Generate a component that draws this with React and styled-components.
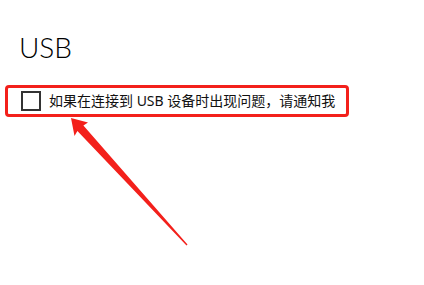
import styled, { createGlobalStyle } from "styled-components";

const GlobalStyle = createGlobalStyle`
  html, body {
    margin: 0;
    padding: 0;
    background: #ffffff;
  }
  body {
    font-family: "Noto Sans", "Noto Sans CJK SC", sans-serif;
    color: #000;
  }
`;

const Page = styled.div`
  position: relative;
  width: 424px;
  height: 285px;
  overflow: hidden;
  background: #fff;
`;

const Title = styled.h1`
  margin: 29px 0 0 19px;
  font-family: Lato, "Noto Sans", sans-serif;
  font-size: 28px;
  line-height: 36px;
  font-weight: 300;
  color: #000;
`;

const Highlight = styled.div`
  display: flex;
  align-items: center;
  gap: 8px;
  box-sizing: border-box;
  width: 344px;
  height: 32px;
  margin: 20px 0 0 5px;
  padding-left: 13px;
  border: 3px solid #f3201b;
  border-radius: 4px;
`;

const Box = styled.span`
  box-sizing: border-box;
  width: 20px;
  height: 20px;
  border: 2px solid #333;
  background: #fff;
  flex: none;
`;

const Label = styled.span`
  font-family: "Noto Sans", "Noto Sans CJK SC", sans-serif;
  font-size: 14px;
  line-height: 20px;
  color: #111;
  white-space: nowrap;
`;

const Overlay = styled.svg`
  position: absolute;
  left: 0;
  top: 0;
  pointer-events: none;
`;

export default function App() {
  return (
    <>
      <GlobalStyle />
      <Page>
        <Title>USB</Title>
        <Highlight>
          <Box />
          <Label>如果在连接到 USB 设备时出现问题，请通知我</Label>
        </Highlight>
        <Overlay width="424" height="285" viewBox="0 0 424 285">
          <polygon
            fill="#f3201b"
            points="71,118 88,122.5 83.4,125.6 187.5,244.5 186.5,245.5 77.4,131 74.5,136"
          />
        </Overlay>
      </Page>
    </>
  );
}
